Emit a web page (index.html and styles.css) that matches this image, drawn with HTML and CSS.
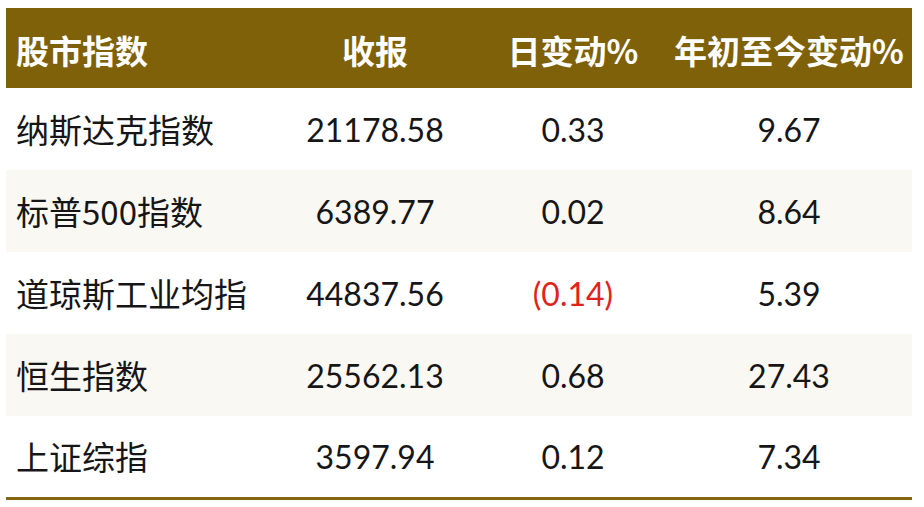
FILE: index.html
```html
<!DOCTYPE html>
<html lang="zh-CN">
<head>
<meta charset="utf-8">
<link rel="stylesheet" href="styles.css">
</head>
<body>
<table class="idx">
  <thead>
    <tr class="head">
      <th class="name">股市指数</th>
      <th class="num c2">收报</th>
      <th class="num c3">日变动%</th>
      <th class="num c4">年初至今变动%</th>
    </tr>
  </thead>
  <tbody>
    <tr class="row">
      <td class="name">纳斯达克指数</td>
      <td class="num">21178.58</td>
      <td class="num">0.33</td>
      <td class="num">9.67</td>
    </tr>
    <tr class="row alt">
      <td class="name">标普500指数</td>
      <td class="num">6389.77</td>
      <td class="num">0.02</td>
      <td class="num">8.64</td>
    </tr>
    <tr class="row">
      <td class="name">道琼斯工业均指</td>
      <td class="num">44837.56</td>
      <td class="num neg">(0.14)</td>
      <td class="num">5.39</td>
    </tr>
    <tr class="row alt">
      <td class="name">恒生指数</td>
      <td class="num">25562.13</td>
      <td class="num">0.68</td>
      <td class="num">27.43</td>
    </tr>
    <tr class="row last">
      <td class="name">上证综指</td>
      <td class="num">3597.94</td>
      <td class="num">0.12</td>
      <td class="num">7.34</td>
    </tr>
  </tbody>
</table>
</body>
</html>
```
FILE: styles.css
```css
html, body {
  margin: 0;
  padding: 0;
  background: #ffffff;
}
body {
  padding: 8px 0 0 6px;
}
.idx {
  width: 906px;
  border-collapse: collapse;
  table-layout: fixed;
  font-family: Lato, "Noto Sans CJK SC", sans-serif;
  color: #161616;
}
.idx th, .idx td {
  padding: 0;
  white-space: nowrap;
}
.head {
  background: #7e6108;
  height: 80px;
}
.head th {
  color: #ffffff;
  font-family: "Noto Sans CJK SC", sans-serif;
  font-weight: 700;
  font-size: 33px;
  padding-top: 4px;
}
.name {
  text-align: left;
  padding-left: 10px !important;
  width: 254px;
}
.c2 { width: 210px; }
.c3 { width: 186px; }
.c4 { width: auto; }
.num {
  text-align: center;
}
.row {
  height: 82px;
}
.row td {
  font-size: 32px;
  font-weight: 400;
}
.row td.name {
  font-family: "Noto Sans CJK SC", sans-serif;
  font-size: 33px;
}
.alt {
  background: #faf8f3;
}
.last {
  border-bottom: 3px solid #83660c;
}
.neg {
  color: #e0231c;
}
```
